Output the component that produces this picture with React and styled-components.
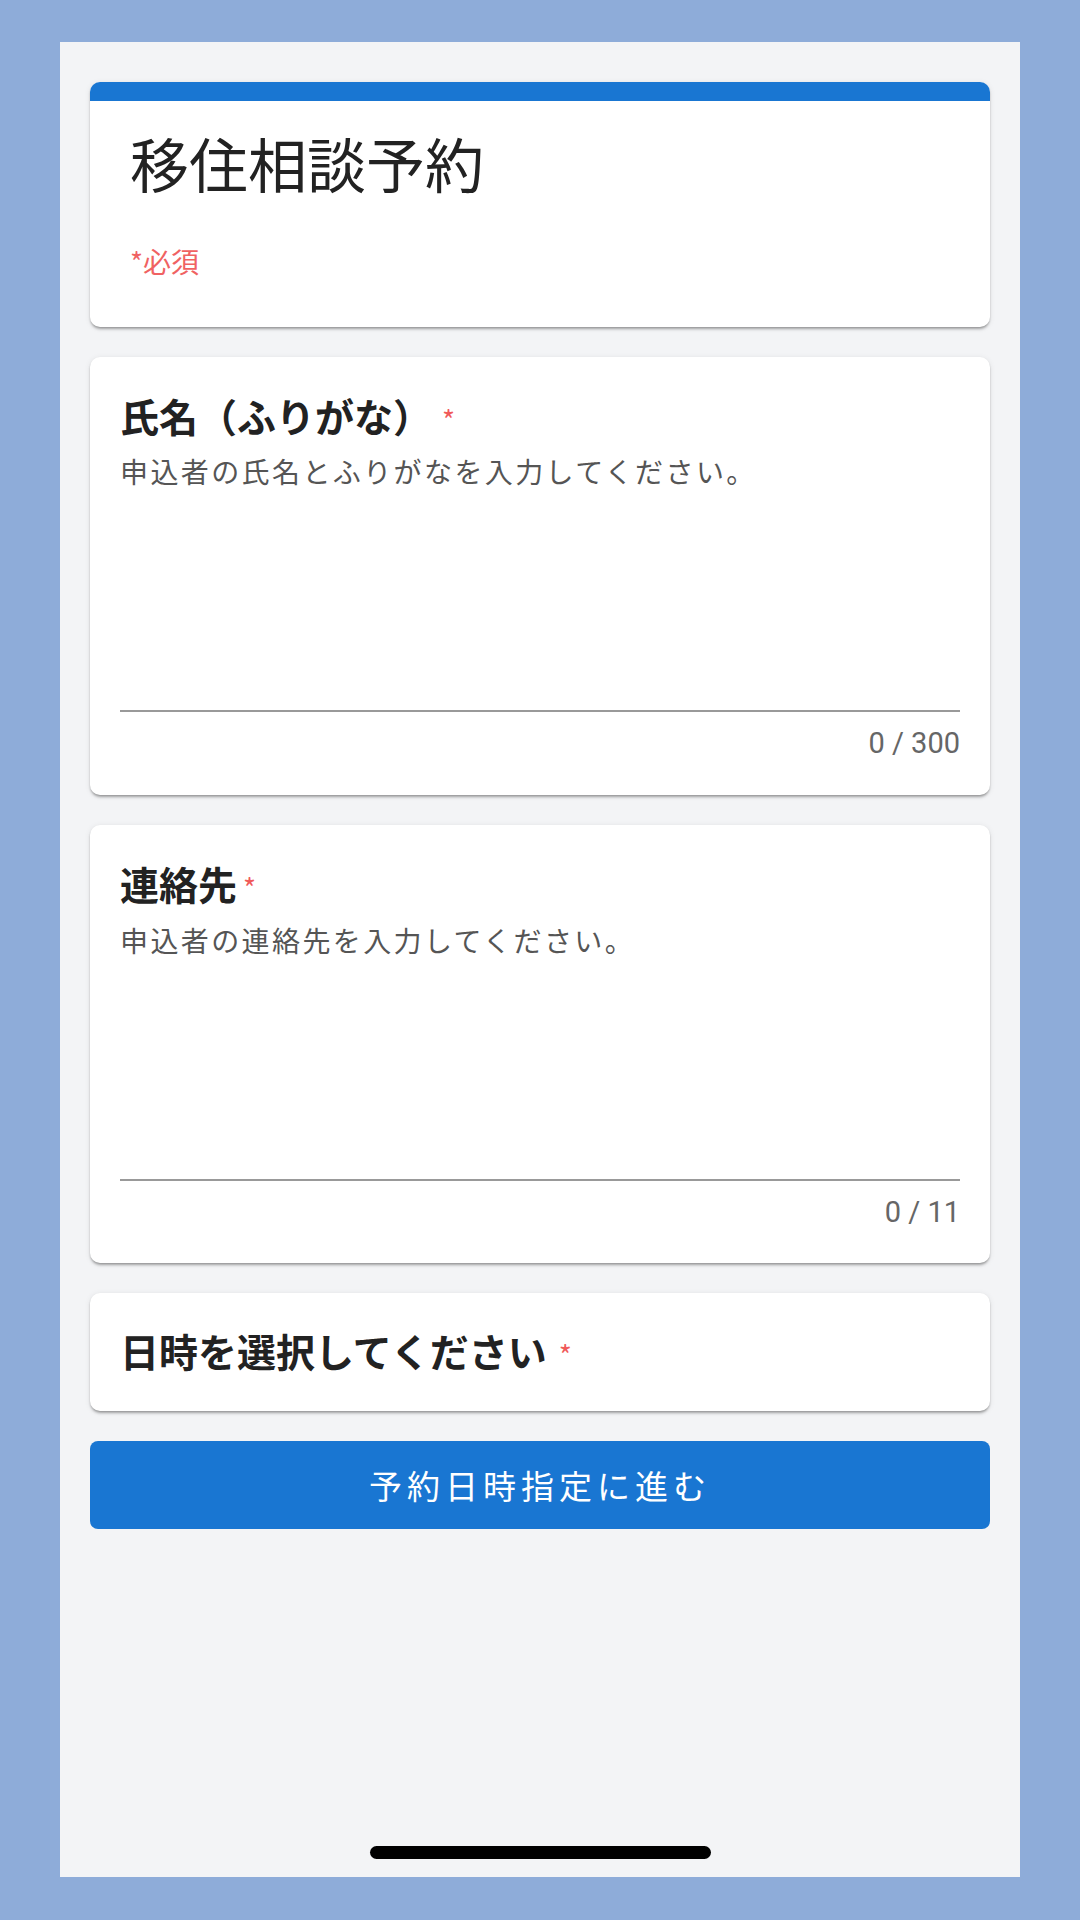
import React from "react";
import styled, { createGlobalStyle } from "styled-components";

const Global = createGlobalStyle`
  html, body {
    margin: 0;
    padding: 0;
    background: #8eacd9;
  }
  body {
    font-family: "Noto Sans CJK JP", "Noto Sans", sans-serif;
  }
`;

const Screen = styled.div`
  width: 1080px;
  height: 1920px;
  box-sizing: border-box;
  padding: 42px 60px 43px;
  background: #8eacd9;
`;

const Phone = styled.div`
  height: 100%;
  background: #f3f4f6;
  box-sizing: border-box;
  padding: 40px 30px 18px;
  display: flex;
  flex-direction: column;
  gap: 30px;
`;

const Card = styled.div`
  background: #fff;
  border-radius: 10px;
  overflow: hidden;
  box-shadow: 0 3px 3px -1px rgba(0, 0, 0, 0.28), 0 1px 2px rgba(0, 0, 0, 0.12),
    0 1px 6px rgba(0, 0, 0, 0.08);
`;

const TopBar = styled.div`
  height: 19px;
  background: #1976d2;
`;

const HeaderBody = styled.div`
  padding: 24px 40px 45px;
`;

const FormTitle = styled.h1`
  margin: 0;
  font-size: 59px;
  font-weight: 400;
  line-height: 1.3;
  color: #222;
`;

const RequiredNote = styled.div`
  margin-top: 38px;
  font-size: 28px;
  line-height: 1.5;
  color: #f06262;
`;

const Field = styled.div`
  padding: ${(p) => (p.$compact ? "32px 30px 35px" : "33px 30px 29px")};
`;

const Label = styled.div`
  font-size: 39px;
  font-weight: 700;
  line-height: 1.3;
  color: #222;
`;

const Star = styled.span`
  margin-left: ${(p) => p.$gap || 6}px;
  font-size: 28px;
  font-weight: 400;
  color: #f05a5a;
  position: relative;
  top: -1px;
`;

const Hint = styled.div`
  margin-top: 10px;
  font-size: 28px;
  line-height: 1.5;
  letter-spacing: 2.4px;
  color: #555;
`;

const Area = styled.textarea`
  display: block;
  width: 100%;
  height: 220px;
  box-sizing: border-box;
  border: none;
  border-bottom: 2px solid #999;
  outline: none;
  resize: none;
  background: transparent;
  font-family: inherit;
  font-size: 28px;
`;

const Counter = styled.div`
  margin-top: 10px;
  text-align: right;
  font-family: Roboto, "Liberation Sans", sans-serif;
  font-size: 29px;
  line-height: 1.5;
  color: #666;
`;

const Submit = styled.button`
  height: 88px;
  border: none;
  border-radius: 8px;
  background: #1976d2;
  color: #fff;
  font-family: "Noto Sans CJK JP", sans-serif;
  font-size: 33px;
  letter-spacing: 5px;
  cursor: pointer;
`;

const HomeBar = styled.div`
  margin-top: auto;
  align-self: center;
  width: 341px;
  height: 13px;
  border-radius: 7px;
  background: #000;
`;

const TextField = ({ label, hint, max, gap }) => (
  <Card>
    <Field>
      <Label>
        {label}
        <Star $gap={gap}>*</Star>
      </Label>
      <Hint>{hint}</Hint>
      <Area />
      <Counter>0 / {max}</Counter>
    </Field>
  </Card>
);

export default function App() {
  return (
    <>
      <Global />
      <Screen>
        <Phone>
          <Card>
            <TopBar />
            <HeaderBody>
              <FormTitle>移住相談予約</FormTitle>
              <RequiredNote>*必須</RequiredNote>
            </HeaderBody>
          </Card>
          <TextField
            label="氏名（ふりがな）"
            hint="申込者の氏名とふりがなを入力してください。"
            max={300}
            gap={10}
          />
          <TextField
            label="連絡先"
            hint="申込者の連絡先を入力してください。"
            max={11}
          />
          <Card>
            <Field $compact>
              <Label>
                日時を選択してください
                <Star $gap={12}>*</Star>
              </Label>
            </Field>
          </Card>
          <Submit>予約日時指定に進む</Submit>
          <HomeBar />
        </Phone>
      </Screen>
    </>
  );
}
